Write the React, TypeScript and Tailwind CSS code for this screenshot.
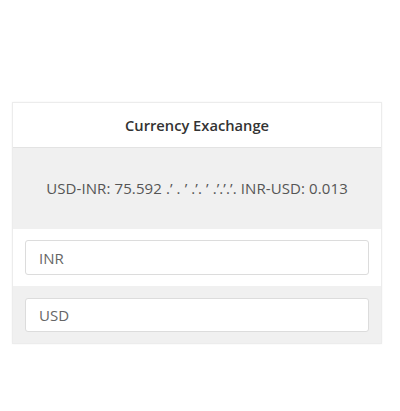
export default function App() {
  return (
    <div className="w-[400px] h-[411px] bg-white pt-[102px] px-3 font-['Open_Sans',sans-serif]">
      <div className="w-[370px] border border-[#ececec] shadow-[0_0_2px_rgba(0,0,0,0.05)]">
        {/* Header */}
        <div className="h-[45px] flex items-center justify-center border-b border-[#e3e3e3] bg-white">
          <h1 className="text-[14.7px] font-semibold text-[#333]">Currency Exachange</h1>
        </div>

        {/* Rates */}
        <div className="h-[81px] flex items-center justify-center bg-[#f0f0f0]">
          <p className="text-[15px] text-[#555] tracking-[0.1px] whitespace-nowrap">
            USD-INR: 75.592 .&#8217; . &#8217; .&#8217;. &#8217; .&#8217;.&#8217;.&#8217;. INR-USD: 0.013
          </p>
        </div>

        {/* Inputs */}
        <div className="px-3 py-[11px] bg-white border-b border-[#f0f0f0]">
          <input
            type="text"
            placeholder="INR"
            className="w-full h-[35px] px-[13px] text-[15px] bg-white border border-[#dcdcdc] rounded-[3px] outline-none placeholder:text-[#666]"
          />
        </div>
        <div className="px-3 py-[11px] bg-[#f0f0f0]">
          <input
            type="text"
            placeholder="USD"
            className="w-full h-[34px] px-[13px] text-[15px] bg-white border border-[#dcdcdc] rounded-[3px] outline-none placeholder:text-[#666]"
          />
        </div>
      </div>
    </div>
  )
}
